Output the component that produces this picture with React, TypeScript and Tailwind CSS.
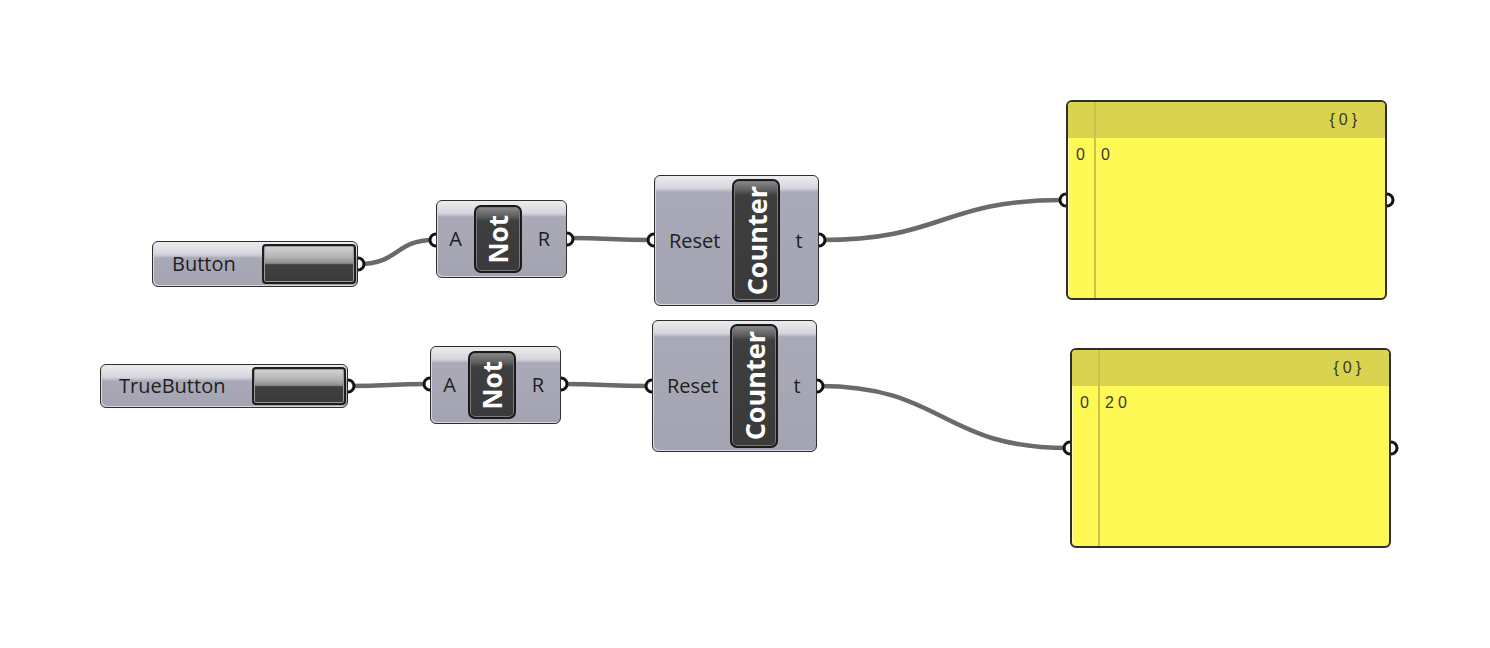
const nodeBg =
  "bg-[linear-gradient(to_bottom,#ececf0_0px,#d6d6de_12px,#c4c4cf_14px,#a9a9b7_16px,#a3a3b1_100%)]";

function Port({ x, y, side }: { x: number; y: number; side: "in" | "out" }) {
  const sweep = side === "in" ? 0 : 1;
  return (
    <path
      d={`M${x},${y - 6} A6,6 0 0 ${sweep} ${x},${y + 6}`}
      fill="#ffffff"
      stroke="#111"
      strokeWidth={3}
    />
  );
}

function Wires() {
  const wire = { fill: "none", stroke: "#6a6a6a", strokeWidth: 4.5, strokeLinecap: "round" as const };
  return (
    <svg className="absolute inset-0" width={1490} height={648}>
      <path d="M360,264 C398,264 396,240 433,240" {...wire} />
      <path d="M569,238 C610,238 610,240 651,240" {...wire} />
      <path d="M821,240 C945,240 940,200 1064,200" {...wire} />
      <path d="M350,386 C390,386 388,384 427,384" {...wire} />
      <path d="M563,384 C605,384 605,386 649,386" {...wire} />
      <path d="M819,386 C945,386 940,448 1068,448" {...wire} />

      <Port x={358} y={264} side="out" />
      <Port x={436} y={240} side="in" />
      <Port x={567} y={239} side="out" />
      <Port x={654} y={240} side="in" />
      <Port x={819} y={240} side="out" />
      <Port x={1066} y={200} side="in" />
      <Port x={1387} y={200} side="out" />

      <Port x={348} y={386} side="out" />
      <Port x={430} y={384} side="in" />
      <Port x={561} y={384} side="out" />
      <Port x={652} y={386} side="in" />
      <Port x={817} y={386} side="out" />
      <Port x={1070} y={448} side="in" />
      <Port x={1391} y={448} side="out" />
    </svg>
  );
}

function NameBox({ text, big }: { text: string; big?: boolean }) {
  return (
    <div className="self-stretch w-[48px] rounded-[7px] border-2 border-[#1a1a1a] bg-[linear-gradient(to_bottom,#8a8a8a_0px,#5a5a5a_10px,#3e3e3e_14px,#3a3a3a_100%)] shadow-[inset_0_0_0_1px_#7a7a7a] flex items-center justify-center">
      <span
        className={`[writing-mode:vertical-rl] rotate-180 font-bold text-white font-['Open_Sans',sans-serif] leading-none ${big ? "text-[27px]" : "text-[26px]"}`}
      >
        {text}
      </span>
    </div>
  );
}

function ButtonWidget() {
  return (
    <div className="w-[94px] self-stretch rounded-[4px] border-2 border-[#1e1e1e] shadow-[inset_0_0_0_1px_#9a9a9a] bg-[linear-gradient(to_bottom,#d4d4d4_0px,#b4b4b4_30%,#8e8e8e_48%,#404040_52%,#3a3a3a_100%)]" />
  );
}

function Panel({ value, className }: { value: string; className: string }) {
  return (
    <div
      className={`absolute w-[321px] h-[200px] rounded-[6px] border-2 border-[#2e2e2e] bg-[#fff955] overflow-hidden shadow-[inset_1px_1px_0_#fffbb0] font-['Liberation_Sans',sans-serif] text-[#3a3a2a] ${className}`}
    >
      <div className="h-[36px] bg-[#d9d34f] flex items-center justify-end pr-[24px] text-[16px] tracking-[4px]">
        {"{0}"}
      </div>
      <div className="absolute left-[26px] top-0 bottom-0 w-[1.5px] bg-[#c9c348]" />
      <div className="flex pt-[5px] text-[16px] tracking-[4px]">
        <span className="w-[28px] pl-[8px]">0</span>
        <span className="pl-[5px]">{value}</span>
      </div>
    </div>
  );
}

export default function App() {
  return (
    <div className="relative w-[1490px] h-[648px] bg-white overflow-hidden font-['Open_Sans',sans-serif]">
      <Wires />

      {/* Button */}
      <div className={`absolute left-[152px] top-[241px] w-[206px] h-[46px] rounded-[6px] border-[1.5px] border-[#2e2e2e] ${nodeBg} shadow-[inset_1px_-1px_0_#d8d8e0] flex items-stretch py-[2px] pr-[1px]`}>
        <div className="flex-1 flex items-center pl-[19px] text-[20px] text-[#1e1e1e]">Button</div>
        <ButtonWidget />
      </div>

      {/* TrueButton */}
      <div className={`absolute left-[100px] top-[364px] w-[248px] h-[44px] rounded-[6px] border-[1.5px] border-[#2e2e2e] ${nodeBg} shadow-[inset_1px_-1px_0_#d8d8e0] flex items-stretch py-[2px] pr-[1px]`}>
        <div className="flex-1 flex items-center pl-[18px] text-[20px] text-[#1e1e1e]">TrueButton</div>
        <ButtonWidget />
      </div>

      {/* Not 1 */}
      <div className={`absolute left-[436px] top-[200px] w-[131px] h-[78px] rounded-[6px] border-[1.5px] border-[#2e2e2e] ${nodeBg} shadow-[inset_1px_-1px_0_#d8d8e0] flex items-stretch py-[4px] text-[20px] text-[#1e1e1e]`}>
        <div className="w-[37px] flex items-center justify-center">A</div>
        <NameBox text="Not" />
        <div className="flex-1 flex items-center justify-center">R</div>
      </div>

      {/* Not 2 */}
      <div className={`absolute left-[430px] top-[346px] w-[131px] h-[78px] rounded-[6px] border-[1.5px] border-[#2e2e2e] ${nodeBg} shadow-[inset_1px_-1px_0_#d8d8e0] flex items-stretch py-[4px] text-[20px] text-[#1e1e1e]`}>
        <div className="w-[37px] flex items-center justify-center">A</div>
        <NameBox text="Not" />
        <div className="flex-1 flex items-center justify-center">R</div>
      </div>

      {/* Counter 1 */}
      <div className={`absolute left-[654px] top-[175px] w-[165px] h-[131px] rounded-[6px] border-[1.5px] border-[#2e2e2e] ${nodeBg} shadow-[inset_1px_-1px_0_#d8d8e0] flex items-stretch py-[3px] text-[20px] text-[#1e1e1e]`}>
        <div className="w-[77px] flex items-center pl-[14px]">Reset</div>
        <NameBox text="Counter" big />
        <div className="flex-1 flex items-center justify-center">t</div>
      </div>

      {/* Counter 2 */}
      <div className={`absolute left-[652px] top-[320px] w-[165px] h-[132px] rounded-[6px] border-[1.5px] border-[#2e2e2e] ${nodeBg} shadow-[inset_1px_-1px_0_#d8d8e0] flex items-stretch py-[3px] text-[20px] text-[#1e1e1e]`}>
        <div className="w-[77px] flex items-center pl-[14px]">Reset</div>
        <NameBox text="Counter" big />
        <div className="flex-1 flex items-center justify-center">t</div>
      </div>

      <Panel value="0" className="left-[1066px] top-[100px]" />
      <Panel value="20" className="left-[1070px] top-[348px]" />
    </div>
  );
}
